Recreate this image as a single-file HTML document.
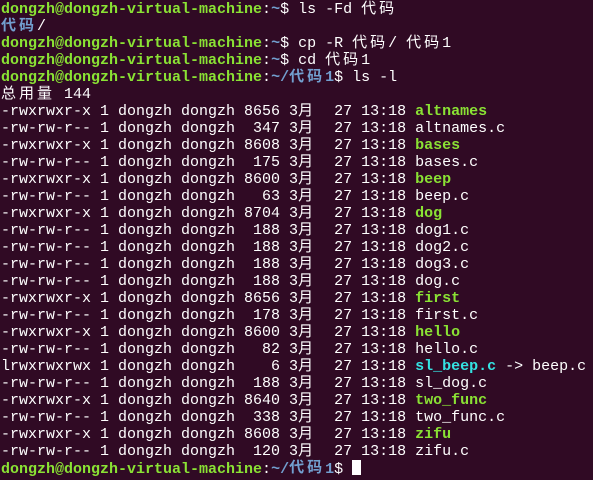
<!DOCTYPE html>
<html><head><meta charset="utf-8"><style>
html,body{margin:0;padding:0;background:#300a24;width:593px;height:480px;overflow:hidden}
.t{padding:1px 0 0 1px;font-family:"Liberation Mono","Noto Sans CJK SC",monospace;font-size:15px;color:#ffffff}
.t div{height:17px;line-height:17px;white-space:pre;overflow:visible}
.c{display:inline-block;width:18px;height:17px;line-height:17px;vertical-align:top;text-align:left}
.g{color:#8ae234;font-weight:bold}
.b{color:#729fcf;font-weight:bold}
.y{color:#34e2e2;font-weight:bold}
.cur{display:inline-block;width:9px;height:15px;background:#fff;vertical-align:-2px}
</style></head><body><div class="t">
<div><span class="g">dongzh@dongzh-virtual-machine</span>:<span class="b">~</span>$ ls -Fd <span class="c">代</span><span class="c">码</span></div>
<div><span class="b"><span class="c">代</span><span class="c">码</span></span>/</div>
<div><span class="g">dongzh@dongzh-virtual-machine</span>:<span class="b">~</span>$ cp -R <span class="c">代</span><span class="c">码</span>/ <span class="c">代</span><span class="c">码</span>1</div>
<div><span class="g">dongzh@dongzh-virtual-machine</span>:<span class="b">~</span>$ cd <span class="c">代</span><span class="c">码</span>1</div>
<div><span class="g">dongzh@dongzh-virtual-machine</span>:<span class="b">~/<span class="c">代</span><span class="c">码</span>1</span>$ ls -l</div>
<div><span class="c">总</span><span class="c">用</span><span class="c">量</span> 144</div>
<div>-rwxrwxr-x 1 dongzh dongzh 8656 3<span class="c">月</span>  27 13:18 <span class="g">altnames</span></div>
<div>-rw-rw-r-- 1 dongzh dongzh  347 3<span class="c">月</span>  27 13:18 altnames.c</div>
<div>-rwxrwxr-x 1 dongzh dongzh 8608 3<span class="c">月</span>  27 13:18 <span class="g">bases</span></div>
<div>-rw-rw-r-- 1 dongzh dongzh  175 3<span class="c">月</span>  27 13:18 bases.c</div>
<div>-rwxrwxr-x 1 dongzh dongzh 8600 3<span class="c">月</span>  27 13:18 <span class="g">beep</span></div>
<div>-rw-rw-r-- 1 dongzh dongzh   63 3<span class="c">月</span>  27 13:18 beep.c</div>
<div>-rwxrwxr-x 1 dongzh dongzh 8704 3<span class="c">月</span>  27 13:18 <span class="g">dog</span></div>
<div>-rw-rw-r-- 1 dongzh dongzh  188 3<span class="c">月</span>  27 13:18 dog1.c</div>
<div>-rw-rw-r-- 1 dongzh dongzh  188 3<span class="c">月</span>  27 13:18 dog2.c</div>
<div>-rw-rw-r-- 1 dongzh dongzh  188 3<span class="c">月</span>  27 13:18 dog3.c</div>
<div>-rw-rw-r-- 1 dongzh dongzh  188 3<span class="c">月</span>  27 13:18 dog.c</div>
<div>-rwxrwxr-x 1 dongzh dongzh 8656 3<span class="c">月</span>  27 13:18 <span class="g">first</span></div>
<div>-rw-rw-r-- 1 dongzh dongzh  178 3<span class="c">月</span>  27 13:18 first.c</div>
<div>-rwxrwxr-x 1 dongzh dongzh 8600 3<span class="c">月</span>  27 13:18 <span class="g">hello</span></div>
<div>-rw-rw-r-- 1 dongzh dongzh   82 3<span class="c">月</span>  27 13:18 hello.c</div>
<div>lrwxrwxrwx 1 dongzh dongzh    6 3<span class="c">月</span>  27 13:18 <span class="y">sl_beep.c</span> -&gt; beep.c</div>
<div>-rw-rw-r-- 1 dongzh dongzh  188 3<span class="c">月</span>  27 13:18 sl_dog.c</div>
<div>-rwxrwxr-x 1 dongzh dongzh 8640 3<span class="c">月</span>  27 13:18 <span class="g">two_func</span></div>
<div>-rw-rw-r-- 1 dongzh dongzh  338 3<span class="c">月</span>  27 13:18 two_func.c</div>
<div>-rwxrwxr-x 1 dongzh dongzh 8608 3<span class="c">月</span>  27 13:18 <span class="g">zifu</span></div>
<div>-rw-rw-r-- 1 dongzh dongzh  120 3<span class="c">月</span>  27 13:18 zifu.c</div>
<div><span class="g">dongzh@dongzh-virtual-machine</span>:<span class="b">~/<span class="c">代</span><span class="c">码</span>1</span>$ <span class="cur"></span></div>
</div></body></html>
